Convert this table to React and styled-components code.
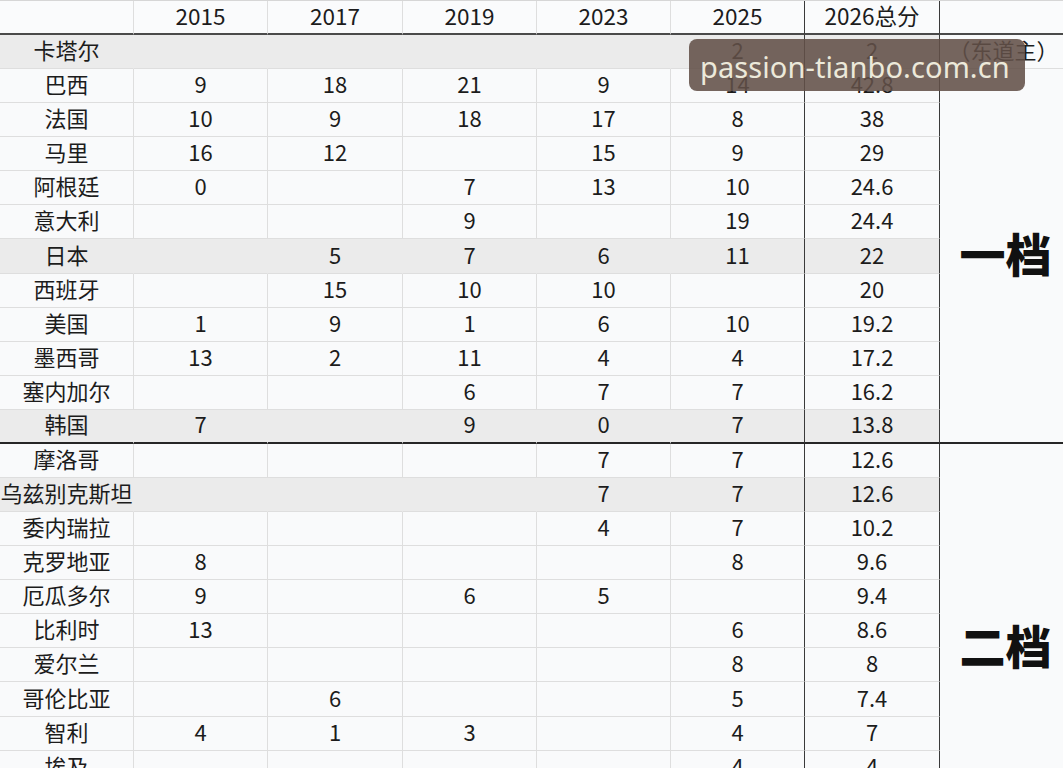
import React from "react";
import styled, { createGlobalStyle } from "styled-components";

const GlobalStyle = createGlobalStyle`
  html, body {
    margin: 0;
    padding: 0;
    background: #f9fafb;
    overflow: hidden;
  }
  body {
    font-family: "Noto Sans CJK SC", "Noto Sans", sans-serif;
    color: #1c1c1c;
  }
`;

const Page = styled.div`
  position: relative;
  width: 1063px;
  height: 768px;
  overflow: hidden;
  background: #f9fafb;
`;

const Sheet = styled.div`
  display: grid;
  grid-template-columns: 134px 134px 135px 134px 134px 134px 135px 123px;
  grid-template-rows: 34px;
  grid-auto-rows: 34.09px;
  border-top: 1px solid #d6d6d6;
`;

const Cell = styled.div`
  box-sizing: border-box;
  display: flex;
  align-items: center;
  justify-content: center;
  padding-bottom: 5px;
  font-size: 22px;
  line-height: 1;
  white-space: nowrap;
  background: ${(p) => (p.$shade ? "#ebebeb" : "transparent")};
  border-bottom: ${(p) => (p.$split ? "2px solid #262626" : "1px solid #dedede")};
  border-right: 1px solid
    ${(p) => (p.$dark ? "#3a3a3a" : p.$shade ? "#ebebeb" : "#dedede")};
`;

const HeadCell = styled(Cell)`
  background: #fafbfc;
  border-bottom: 2px solid #4a4a4a;
  padding-bottom: 4px;
  font-size: 22.5px;
`;

const NameCell = styled(Cell)`
  overflow: visible;
`;

const NoteCell = styled(Cell)`
  padding-left: 4px;
  background: transparent;
  border-right: none;
`;

const TierCell = styled.div`
  box-sizing: border-box;
  grid-column: 8;
  grid-row: ${(p) => p.$start} / span ${(p) => p.$span};
  display: flex;
  align-items: center;
  justify-content: center;
  padding-left: 8px;
  padding-bottom: 8px;
  font-size: 46px;
  font-weight: 900;
  color: #111;
  border-bottom: ${(p) => (p.$split ? "2px solid #262626" : "none")};
`;

const Watermark = styled.div`
  position: absolute;
  left: 689px;
  top: 39px;
  width: 336px;
  height: 52px;
  box-sizing: border-box;
  border-radius: 8px;
  background: rgba(98, 80, 72, 0.88);
  color: #ece9da;
  font-family: "Noto Sans", "Open Sans", sans-serif;
  font-size: 29px;
  line-height: 56px;
  padding-left: 11px;
  letter-spacing: 0.1px;
`;

const years = ["2015", "2017", "2019", "2023", "2025", "2026总分"];

const rows = [
  { name: "卡塔尔", v: ["", "", "", "", "2", "2"], shade: true },
  { name: "巴西", v: ["9", "18", "21", "9", "14", "42.8"] },
  { name: "法国", v: ["10", "9", "18", "17", "8", "38"] },
  { name: "马里", v: ["16", "12", "", "15", "9", "29"] },
  { name: "阿根廷", v: ["0", "", "7", "13", "10", "24.6"] },
  { name: "意大利", v: ["", "", "9", "", "19", "24.4"] },
  { name: "日本", v: ["", "5", "7", "6", "11", "22"], shade: true },
  { name: "西班牙", v: ["", "15", "10", "10", "", "20"] },
  { name: "美国", v: ["1", "9", "1", "6", "10", "19.2"] },
  { name: "墨西哥", v: ["13", "2", "11", "4", "4", "17.2"] },
  { name: "塞内加尔", v: ["", "", "6", "7", "7", "16.2"] },
  { name: "韩国", v: ["7", "", "9", "0", "7", "13.8"], shade: true, split: true },
  { name: "摩洛哥", v: ["", "", "", "7", "7", "12.6"] },
  { name: "乌兹别克斯坦", v: ["", "", "", "7", "7", "12.6"], shade: true },
  { name: "委内瑞拉", v: ["", "", "", "4", "7", "10.2"] },
  { name: "克罗地亚", v: ["8", "", "", "", "8", "9.6"] },
  { name: "厄瓜多尔", v: ["9", "", "6", "5", "", "9.4"] },
  { name: "比利时", v: ["13", "", "", "", "6", "8.6"] },
  { name: "爱尔兰", v: ["", "", "", "", "8", "8"] },
  { name: "哥伦比亚", v: ["", "6", "", "", "5", "7.4"] },
  { name: "智利", v: ["4", "1", "3", "", "4", "7"] },
  { name: "埃及", v: ["", "", "", "", "4", "4"] },
  { name: "", v: ["", "", "", "", "", ""] },
  { name: "", v: ["", "", "", "", "", ""] },
];

export default function App() {
  return (
    <>
      <GlobalStyle />
      <Page>
        <Sheet>
          <HeadCell />
          {years.map((y, i) => (
            <HeadCell key={y} $dark={i >= 4}>
              {y}
            </HeadCell>
          ))}
          <HeadCell style={{ borderRight: "none" }} />

          <TierCell $start={3} $span={11} $split>
            一档
          </TierCell>
          <TierCell $start={14} $span={12}>
            二档
          </TierCell>

          {rows.map((r, ri) => (
            <React.Fragment key={ri}>
              <NameCell $shade={r.shade} $split={r.split}>
                {r.name}
              </NameCell>
              {r.v.map((val, ci) => (
                <Cell
                  key={ci}
                  $shade={r.shade}
                  $split={r.split}
                  $dark={ci >= 4}
                >
                  {val}
                </Cell>
              ))}
              {ri === 0 && <NoteCell>（东道主）</NoteCell>}
            </React.Fragment>
          ))}
        </Sheet>
        <Watermark>passion-tianbo.com.cn</Watermark>
      </Page>
    </>
  );
}
